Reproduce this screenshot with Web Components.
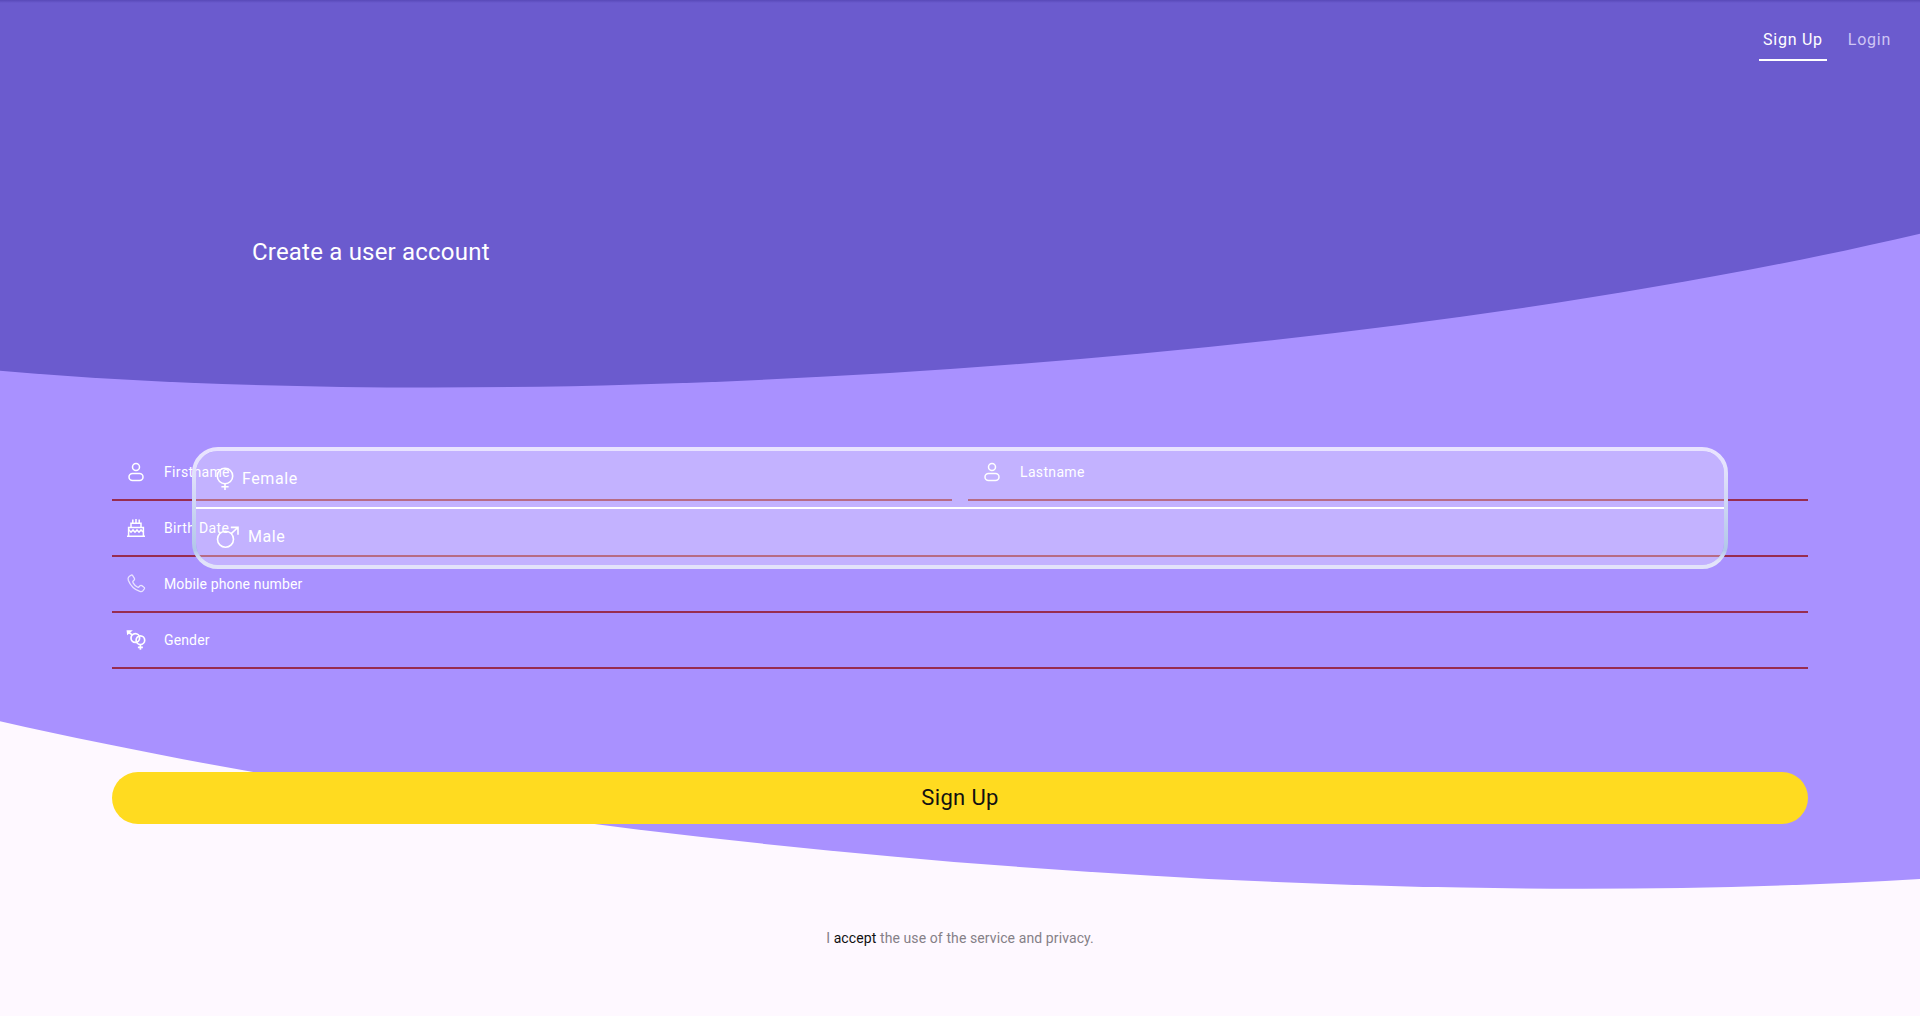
<!DOCTYPE html>
<html lang="en">
<head>
<meta charset="utf-8">
<title>Create a user account</title>
<style>
html,body{margin:0;height:100%;overflow:hidden}
body{font-family:Roboto,"Liberation Sans",sans-serif;color:#fff}
</style>
</head>
<body>
<signup-page></signup-page>
<script>
const define = (name, html) => customElements.define(name, class extends HTMLElement {
  constructor() {
    super();
    this.attachShadow({ mode: 'open' }).innerHTML = html;
  }
});

const ICONS = {
  person: `<svg width="18" height="20" viewBox="0 0 18 20" fill="none" stroke="#fff" stroke-width="1.5"><circle cx="9" cy="5" r="3.5"/><rect x="2" y="11.4" width="14" height="7" rx="3.5"/></svg>`,
  cake: `<svg width="18" height="20" viewBox="0 0 18 20" fill="none" stroke="#fff" stroke-width="1.5"><path d="M0 18.2H18M1.6 18V9.4H16.400V18M4 9.400V5.300H14V9.400M5.800 5V1.500M9 5V1M12.200 5V1.500"/><path d="M1.800 11.700L4 14.200L6 11.900L8 14.200L10 11.900L12 14.200L14 11.900L16.200 14"/></svg>`,
  phone: `<svg width="18" height="20" viewBox="0 0 18 20" fill="none" stroke="#fff" stroke-opacity=".75" stroke-width="1.3"><path d="M2.100 2.500L4 1.200C4.700.8 5.300 1 5.700 1.600L7.400 4.300C7.800 5 7.700 5.600 7.200 6.100L6 7.200C5.600 7.700 5.700 8.200 6.100 8.900C7.100 10.700 8.500 12 10.300 13C10.900 13.400 11.400 13.300 11.900 12.900L13 11.800C13.500 11.300 14.100 11.200 14.800 11.600L17 13.200C17.600 13.600 17.700 14.300 17.300 14.900L16 16.700C15.300 17.600 14.100 17.900 12.800 17.400C7.500 15.500 3.400 11.600 1.300 6.200C.8 4.700 1 3.400 2.100 2.500Z"/></svg>`,
  gender: `<svg width="18" height="20" viewBox="0 0 18 20" fill="none" stroke="#fff" stroke-width="1.7"><circle cx="8.300" cy="8" r="4.300"/><circle cx="13.400" cy="10.200" r="4.300"/><path d="M5.200 4.900L1.500 2.200M13.400 14.500V19.800M10.900 17.300H15.900"/><path d="M.5 1.200H3.600L.8 3.600Z" fill="#fff"/></svg>`,
  female: `<svg width="18" height="24" viewBox="0 0 18 24" fill="none" stroke="#fff" stroke-width="1.600"><circle cx="9" cy="9" r="7.700"/><path d="M9 16.700V23M5.400 19.700H12.600"/></svg>`,
  male: `<svg width="24" height="24" viewBox="0 0 24 24" fill="none" stroke="#fff" stroke-width="1.600"><circle cx="9.500" cy="14.200" r="8"/><path d="M15.200 8.700L21.800 2.500M14.800 2.400H22V9.700"/></svg>`
};
customElements.define('line-icon', class extends HTMLElement {
  connectedCallback() {
    this.attachShadow({ mode: 'open' }).innerHTML =
      `<style>:host{display:flex;align-items:center;justify-content:center}svg{display:block;overflow:visible}</style>` + ICONS[this.getAttribute('name')];
  }
});

define('wave-backdrop', `
<style>:host{display:block;background:#fef8ff}svg{display:block;width:100%;height:100%}</style>
<svg viewBox="0 0 1920 1016" preserveAspectRatio="none">
  <defs><linearGradient id="edge" x2="0" y2="1"><stop stop-color="#5849b8"/><stop offset="1" stop-color="#6b5bce"/></linearGradient></defs>
  <path fill="#a991ff" d="M0 0H1920V879C1341 914 579 852 0 721.300Z"/>
  <path fill="#6b5bce" d="M0 0H1920V233.700C1357 365.300 535 417.500 0 370.700Z"/>
  <rect width="1920" height="3" fill="url(#edge)"/>
</svg>`);

define('nav-tab', `
<style>
:host{display:block;padding:1px 4px 0;font-size:16px;line-height:40px;height:39px;letter-spacing:.74px;color:#cfc6f4;border-bottom:2px solid transparent;white-space:nowrap}
:host([active]){color:#fff;border-color:#fff}
</style><slot></slot>`);

define('form-field', `
<style>
:host{display:flex;flex:1;box-sizing:border-box;height:56px;align-items:center;border-bottom:2px solid #982c50;font-size:14px;letter-spacing:.14px;white-space:nowrap}
::slotted(line-icon){width:48px}
.label{padding-left:4px}
:host([wide]) .label{letter-spacing:.34px}
</style><slot name="icon"></slot><span class="label"><slot></slot></span>`);

define('gender-option', `
<style>
:host{display:flex;height:56px;align-items:center;font-size:16px;letter-spacing:.6px;padding-left:20px}
:host(:not(:last-of-type)){border-bottom:2px solid #fff}
span{padding:0 0 2px 8px}
</style><slot name="icon"></slot><span><slot></slot></span>`);

define('gender-menu', `
<style>
:host{display:block;box-sizing:border-box;border:4px solid transparent;border-radius:26px;background:rgba(255,255,255,.3) padding-box}
svg{position:absolute;inset:-4px;overflow:visible;pointer-events:none}
</style>
<svg width="1536" height="122"><defs><linearGradient id="rim" x2="0" y2="1"><stop stop-color="#e9e3ff"/><stop offset=".14" stop-color="#e5e3fd"/><stop offset=".86" stop-color="#b2c7e9"/><stop offset=".95" stop-color="#e2e3fa"/></linearGradient></defs>
<rect x="2" y="2" width="1532" height="118" rx="24" fill="none" stroke="url(#rim)" stroke-width="4"/></svg>
<slot></slot>`);

define('primary-button', `
<style>
:host{display:block}
button{display:block;width:100%;height:52px;border:0;border-radius:26px;background:#ffdb20;color:#111;font:400 22px Roboto,"Liberation Sans",sans-serif;letter-spacing:.35px;padding:0 0 2px}
</style><button><slot></slot></button>`);

define('signup-page', `
<style>
:host{display:grid;height:1016px;width:1920px}
wave-backdrop,main{grid-area:1/1}
main{display:flex;flex-direction:column;min-width:0;z-index:1}
nav{display:flex;justify-content:flex-end;gap:17px;padding:19px 25px 0 0}
h1{margin:0;padding:175px 0 0 252px;font-size:24px;font-weight:400;line-height:32px;letter-spacing:.2px}
form{display:flex;flex-direction:column;padding:177px 112px 0;position:relative}
.row{display:flex;gap:16px}
gender-menu{position:absolute;left:192px;top:179px;width:1536px;height:122px}
primary-button{margin-top:103px}
p{margin:0;padding-top:104px;text-align:center;font-size:14px;line-height:20px;letter-spacing:.1px;color:#858087}
b{font-weight:400;color:#111}
</style>
<wave-backdrop></wave-backdrop>
<main>
  <nav><nav-tab active>Sign Up</nav-tab><nav-tab>Login</nav-tab></nav>
  <h1>Create a user account</h1>
  <form>
    <div class="row">
      <form-field wide><line-icon slot="icon" name="person"></line-icon>Firstname</form-field>
      <form-field wide><line-icon slot="icon" name="person"></line-icon>Lastname</form-field>
    </div>
    <div class="row"><form-field wide><line-icon slot="icon" name="cake"></line-icon>Birth Date</form-field></div>
    <div class="row"><form-field><line-icon slot="icon" name="phone"></line-icon>Mobile phone number</form-field></div>
    <div class="row"><form-field><line-icon slot="icon" name="gender"></line-icon>Gender</form-field></div>
    <gender-menu>
      <gender-option><line-icon slot="icon" name="female"></line-icon>Female</gender-option>
      <gender-option><line-icon slot="icon" name="male"></line-icon>Male</gender-option>
    </gender-menu>
    <primary-button>Sign Up</primary-button>
  </form>
  <p>I <b>accept</b> the use of the service and privacy.</p>
</main>`);
</script>
</body>
</html>
